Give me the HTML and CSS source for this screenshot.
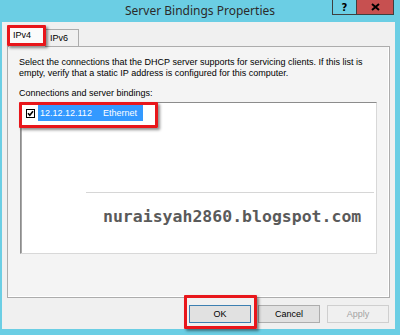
FILE: index.html
```html
<!DOCTYPE html>
<html lang="en">
<head>
  <meta charset="UTF-8">
  <title>Server Bindings Properties</title>
  <link rel="stylesheet" href="styles.css">
</head>
<body>
  <div class="window">
    <div class="titlebar">
      <span></span>
      <div class="title">Server Bindings Properties</div>
      <div class="controls">
        <div class="ctl help">?</div>
        <div class="ctl close">
          <svg width="9" height="8" viewBox="0 0 9 8"><path d="M1 1 L8 7 M8 1 L1 7" stroke="#000" stroke-width="2"/></svg>
        </div>
      </div>
    </div>

    <div class="client">
      <div class="tabs">
        <div class="tab active">IPv4</div>
        <div class="tab">IPv6</div>
      </div>
      <div class="panel">
        <p class="intro">Select the connections that the DHCP server supports for servicing clients. If this list is empty, verify that a static IP address is configured for this computer.</p>
        <p class="label">Connections and server bindings:</p>
        <div class="listbox">
          <div class="item">
            <span class="check">
              <svg width="9" height="9" viewBox="0 0 9 9"><rect x="0.5" y="0.5" width="8" height="8" fill="#fff" stroke="#000"/><path d="M2 4.2 L3.8 6.2 L7 2.2" stroke="#000" stroke-width="1.6" fill="none"/></svg>
            </span>
            <span class="selected"><span class="ip">12.12.12.112</span><span class="nic">Ethernet</span></span>
          </div>
          <div class="faint-line"></div>
          <div class="watermark">nuraisyah2860.blogspot.com</div>
        </div>
      </div>
      <div class="buttons">
        <button class="btn default">OK</button>
        <button class="btn">Cancel</button>
        <button class="btn" disabled>Apply</button>
      </div>
    </div>

    <div class="mark mark-tab"></div>
    <div class="mark mark-item"></div>
    <div class="mark mark-ok"></div>
  </div>
</body>
</html>
```

FILE: styles.css
```css
* {
  margin: 0;
  padding: 0;
  box-sizing: border-box;
}
body {
  background: #6bcee4;
  font-family: 'Liberation Sans', Arial, sans-serif;
  font-size: 9px;
  color: #000;
}
.window {
  position: relative;
  width: 400px;
  height: 335px;
}
.titlebar {
  height: 22px;
  display: grid;
  grid-template-columns: 1fr auto 1fr;
  align-items: start;
}
.title {
  font-family: 'Noto Sans', sans-serif;
  font-size: 12px;
  color: #2b2b2b;
  padding-top: 2px;
}
.controls {
  justify-self: end;
  display: flex;
  margin-right: 6px;
}
.ctl {
  height: 15px;
  display: flex;
  align-items: center;
  justify-content: center;
  border: 1px solid #3f3f3f;
  border-top: none;
}
.help {
  width: 25px;
  font-family: 'DejaVu Sans', sans-serif;
  font-weight: bold;
  font-size: 10px;
}
.close {
  width: 37px;
  background: #c75050;
  border-left: none;
}
.client {
  margin: 0 5px 0 2px;
  height: 307px;
  background: #f0f0f0;
  padding: 3px 5px 0 5px;
}
.tabs {
  display: flex;
  align-items: flex-end;
  height: 21px;
  padding-left: 1px;
  position: relative;
  z-index: 1;
}
.tab {
  height: 17px;
  width: 34px;
  padding: 3px 0 0 4px;
  border: 1px solid #acacac;
  border-bottom: none;
  background: #f0f0f0;
}
.tab.active {
  height: 22px;
  width: 37px;
  margin-bottom: -1px;
  padding: 4px 0 0 4px;
  background: #fbfbfb;
  border-right: none;
}
.panel {
  height: 252px;
  border: 1px solid #acacac;
  box-shadow: inset -1px -1px 0 #fff;
  background: #f4f4f4;
  padding: 10px 0 0 11px;
}
.intro {
  line-height: 11px;
  width: 350px;
}
.label {
  margin-top: 9px;
  line-height: 11px;
}
.listbox {
  position: relative;
  margin: 3px 0 0 1px;
  width: 357px;
  height: 152px;
  background: #fff;
  border-top: 1px solid #8c8c8c;
  border-left: 1px solid #8c8c8c;
  border-right: 1px solid #d8d8d8;
  border-bottom: 1px solid #d8d8d8;
  box-shadow: inset 1px 0 0 #a8a8a8;
}
.item {
  display: flex;
  align-items: center;
  padding: 2px 0 0 5px;
}
.check {
  display: flex;
  margin-right: 3px;
}
.selected {
  display: flex;
  background: #3399ff;
  color: #fff;
  height: 16px;
  line-height: 16px;
  padding: 0 6px 0 2px;
}
.nic {
  margin-left: 11px;
}
.faint-line {
  position: absolute;
  left: 65px;
  top: 89px;
  width: 288px;
  height: 1px;
  background: #d6d6d6;
}
.watermark {
  position: absolute;
  left: 82px;
  top: 106px;
  font-family: 'DejaVu Sans Mono', monospace;
  font-weight: bold;
  font-size: 16.5px;
  line-height: 16.5px;
  color: #5a5a5a;
}
.buttons {
  display: flex;
  justify-content: flex-end;
  gap: 7px;
  margin-top: 7px;
  padding-right: 1px;
}
.btn {
  width: 62px;
  height: 18px;
  font-family: 'Liberation Sans', Arial, sans-serif;
  font-size: 9px;
  color: #000;
  background: #e1e1e1;
  border: 1px solid #adadad;
}
.btn.default {
  border-color: #3c7fb1;
}
.btn:disabled {
  background: #f0f0f0;
  border-color: #cfcfcf;
  color: #a3a3a3;
}
.mark {
  position: absolute;
  z-index: 2;
  border: 3px solid #e8161b;
  border-radius: 1px;
  box-shadow: 2px 2px 3px rgba(0, 0, 0, 0.45);
}
.mark-tab {
  left: 7px;
  top: 25px;
  width: 39px;
  height: 21px;
}
.mark-item {
  left: 19px;
  top: 102px;
  width: 139px;
  height: 26px;
}
.mark-ok {
  left: 184px;
  top: 295px;
  width: 73px;
  height: 34px;
}
```
